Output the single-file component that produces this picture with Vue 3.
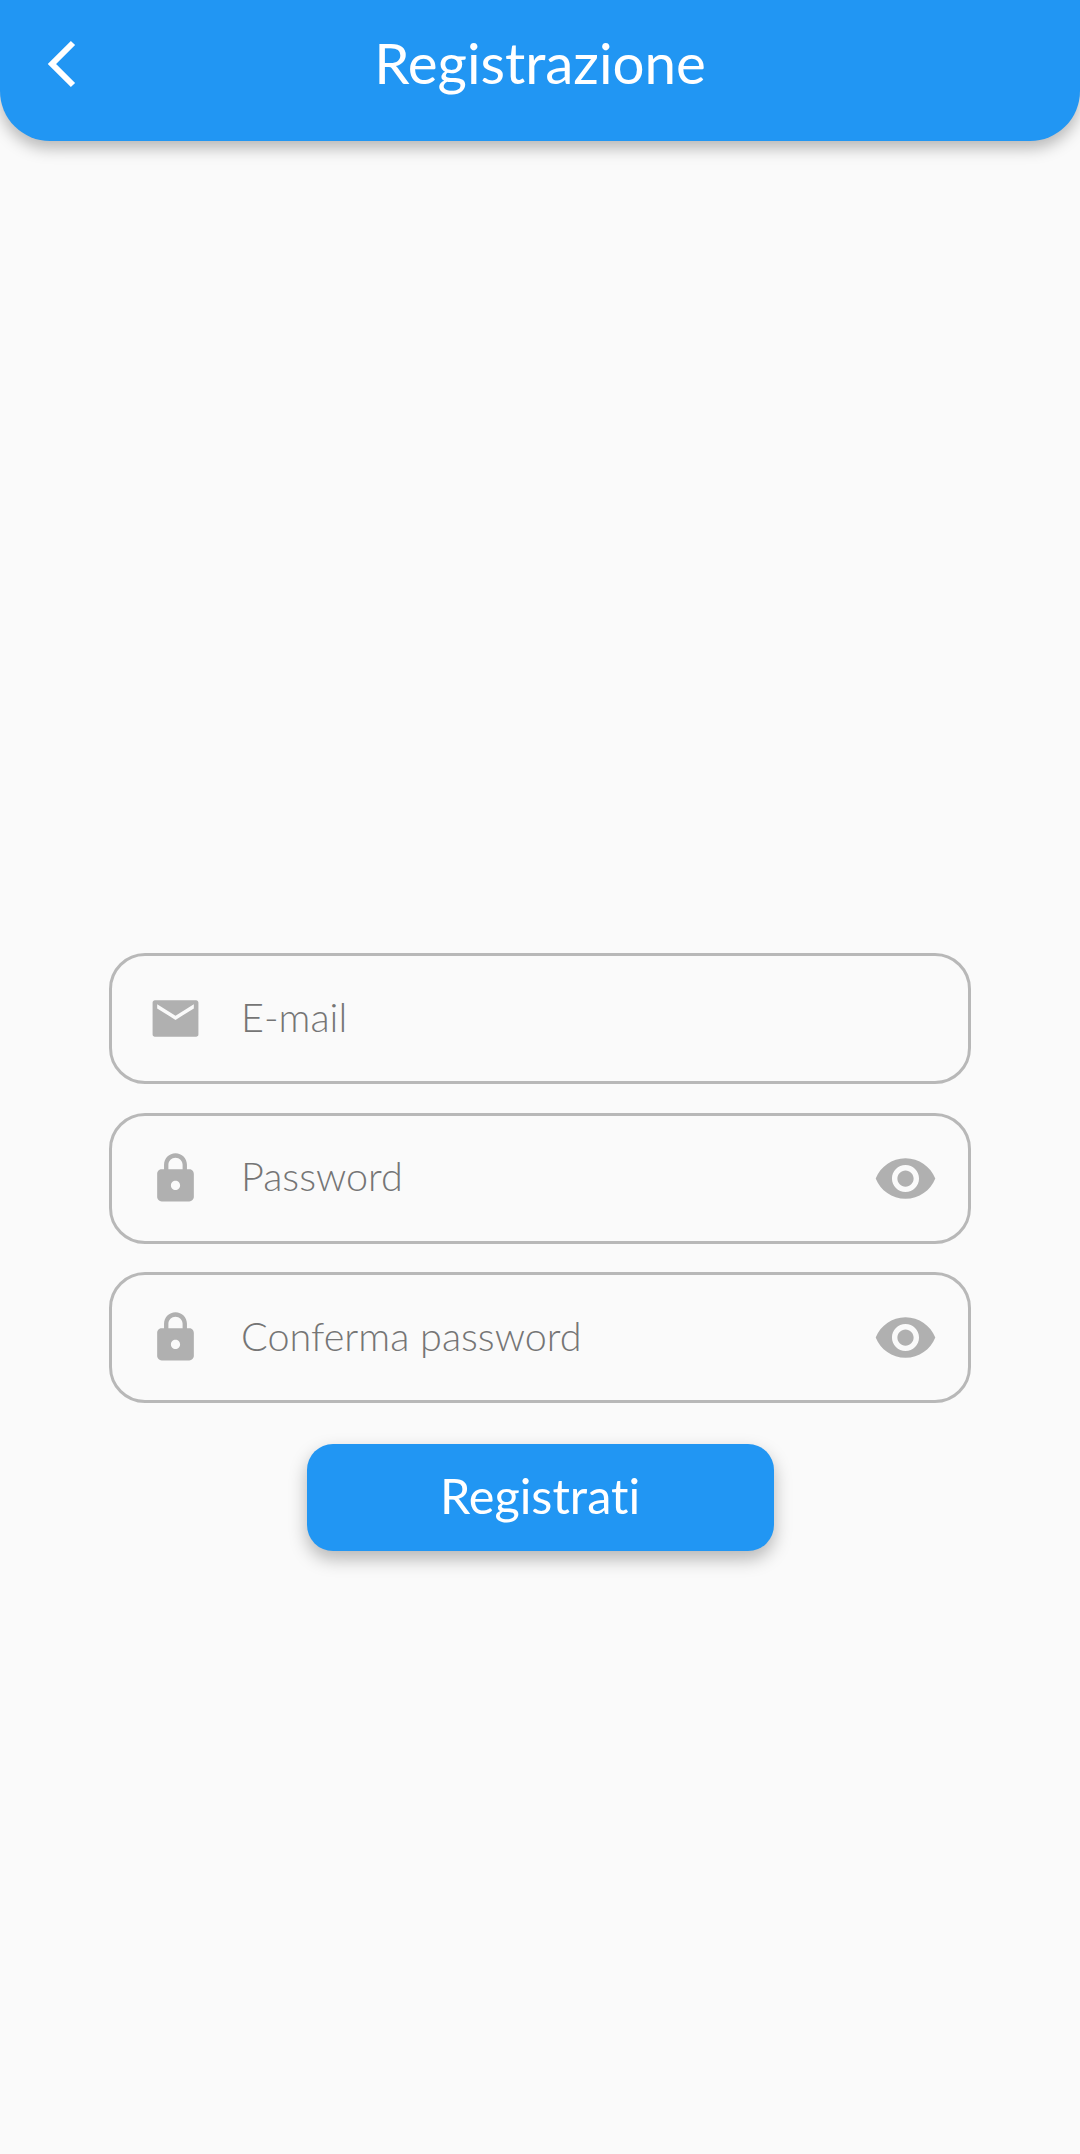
<script setup>
const fields = [
  { label: 'E-mail', icon: 'mail' },
  { label: 'Password', icon: 'lock', eye: true },
  { label: 'Conferma password', icon: 'lock', eye: true }
]
</script>

<template>
  <div class="page">
    <header class="topbar">
      <svg class="back" viewBox="0 0 30 48" fill="none" stroke="#fff" stroke-width="6" stroke-linecap="butt" stroke-linejoin="miter">
        <path d="M27 3 L6 24 L27 45" />
      </svg>
      <h1 class="title">Registrazione</h1>
    </header>

    <main class="form">
      <div v-for="f in fields" :key="f.label" class="field">
        <svg v-if="f.icon === 'mail'" class="icon" viewBox="0 0 24 24" fill="#b0b0b0">
          <path d="M21 4H3c-.55 0-1 .45-1 1v14c0 .55.45 1 1 1h18c.55 0 1-.45 1-1V5c0-.55-.45-1-1-1zm-1 3.6l-8 5-8-5V5.8l8 5 8-5v1.8z" />
        </svg>
        <svg v-else class="icon" viewBox="0 0 24 24" fill="#b0b0b0">
          <path d="M18 8h-1V6c0-2.76-2.24-5-5-5S7 3.24 7 6v2H6c-1.1 0-2 .9-2 2v10c0 1.1.9 2 2 2h12c1.1 0 2-.9 2-2V10c0-1.1-.9-2-2-2zm-6 9c-1.1 0-2-.9-2-2s.9-2 2-2 2 .9 2 2-.9 2-2 2zm3.1-9H8.9V6c0-1.71 1.39-3.1 3.1-3.1s3.1 1.39 3.1 3.1v2z" />
        </svg>
        <span class="label">{{ f.label }}</span>
        <svg v-if="f.eye" class="eye" viewBox="0 0 24 24" fill="#b0b0b0">
          <path d="M12 4.5C7 4.5 2.73 7.61 1 12c1.73 4.39 6 7.5 11 7.5s9.27-3.11 11-7.5c-1.73-4.39-6-7.5-11-7.5zM12 17c-2.76 0-5-2.24-5-5s2.24-5 5-5 5 2.24 5 5-2.24 5-5 5zm0-8c-1.66 0-3 1.34-3 3s1.34 3 3 3 3-1.34 3-3-1.34-3-3-3z" />
        </svg>
      </div>

      <button class="submit">Registrati</button>
    </main>
  </div>
</template>

<style>
html, body {
  margin: 0;
  background: #fafafa;
}
</style>

<style scoped>
.page {
  min-height: 2154px;
  background: #fafafa;
  font-family: "Lato", "Noto Sans", sans-serif;
  font-variant-ligatures: none;
}

.topbar {
  height: 141px;
  background: #2196f3;
  border-radius: 0 0 50px 50px;
  box-shadow: 0 7px 16px rgba(0, 0, 0, 0.28);
  display: flex;
  align-items: center;
  justify-content: center;
  position: relative;
}

.back {
  position: absolute;
  left: 46px;
  top: 40px;
  width: 30px;
  height: 48px;
}

.title {
  margin: 0;
  margin-top: -17px;
  font-size: 56.5px;
  font-weight: 400;
  color: #fff;
}

.form {
  padding: 812px 0 0;
  display: flex;
  flex-direction: column;
  align-items: center;
  gap: 28.5px;
}

.field {
  box-sizing: border-box;
  width: 862px;
  height: 131px;
  border: 3px solid #b8b8b8;
  border-radius: 36px;
  display: flex;
  align-items: center;
  padding: 0 30px 0 36px;
}

.icon {
  width: 55px;
  height: 55px;
  flex: none;
}

.label {
  margin-left: 38px;
  padding-bottom: 5px;
  font-size: 39.6px;
  font-weight: 300;
  color: #757575;
  flex: 1;
}

.eye {
  width: 65px;
  height: 65px;
  flex: none;
}

.submit {
  margin-top: 12px;
  width: 467px;
  height: 107px;
  padding: 0 0 5px;
  border: none;
  border-radius: 26px;
  background: #2196f3;
  color: #fff;
  font-family: inherit;
  font-size: 48.6px;
  font-variant-ligatures: none;
  box-shadow: 0 8px 18px rgba(0, 0, 0, 0.28);
}
</style>
